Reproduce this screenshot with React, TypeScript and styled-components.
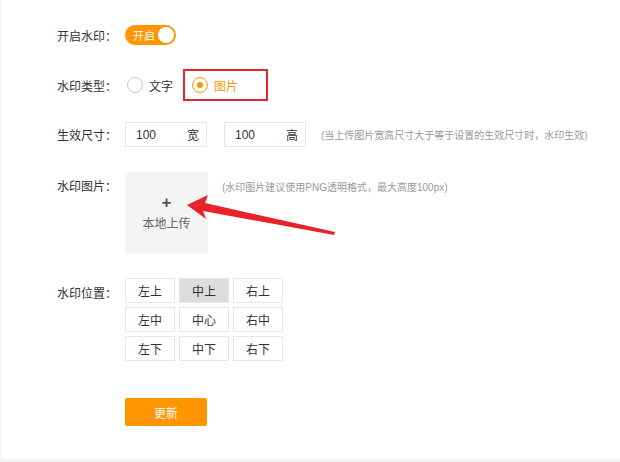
import * as React from 'react';
import styled, { createGlobalStyle } from 'styled-components';

// orange #ff9500, label #333, hint #999

const GlobalStyle = createGlobalStyle`
    html, body {
        margin: 0;
        padding: 0;
        background: #f2f2f2;
        font-family: "Liberation Sans", "Noto Sans CJK SC", sans-serif;
    }
`;

const Panel = styled.div`
    position: relative;
    margin-left: 1px;
    width: 640px;
    height: 459px;
    box-sizing: border-box;
    padding: 25px 0 0 56px;
    background: #fff;
    border-radius: 0 0 0 4px;
    overflow: hidden;
`;

const Row = styled.div<{ $top: number; $align?: string }>`
    display: flex;
    align-items: ${(p) => p.$align || 'center'};
    margin-top: ${(p) => p.$top}px;
`;

const Label = styled.div<{ $pad?: number }>`
    width: 68px;
    flex-shrink: 0;
    font-size: 12px;
    color: #333;
    padding-top: ${(p) => p.$pad || 0}px;
`;

const Switch = styled.div`
    width: 51px;
    height: 20px;
    border-radius: 10px;
    background: #ff9500;
    display: flex;
    align-items: center;
    justify-content: space-between;
    padding: 0 2px 0 8px;
    box-sizing: border-box;
    color: #fff;
    font-size: 11px;
`;

const Knob = styled.span`
    width: 16px;
    height: 16px;
    border-radius: 50%;
    background: #fff;
`;

const RadioOption = styled.label<{ $marked?: boolean }>`
    display: flex;
    align-items: center;
    gap: 6px;
    height: 32px;
    box-sizing: border-box;
    font-size: 12px;
    color: ${(p) => (p.$marked ? '#ff9500' : '#333')};
    border: 2px solid ${(p) => (p.$marked ? '#e3262b' : 'transparent')};
    padding: ${(p) => (p.$marked ? '0 28px 0 7px' : '0 8px 0 0')};
`;

const RadioCircle = styled.span<{ $checked?: boolean }>`
    width: 16px;
    height: 16px;
    box-sizing: border-box;
    border-radius: 50%;
    border: 1px solid ${(p) => (p.$checked ? '#ff9500' : '#c8c8c8')};
    display: flex;
    align-items: center;
    justify-content: center;
    &::after {
        content: '';
        width: 6px;
        height: 6px;
        border-radius: 50%;
        background: ${(p) => (p.$checked ? '#ff9500' : 'transparent')};
    }
`;

const SizeInput = styled.div`
    width: 82px;
    height: 25px;
    box-sizing: border-box;
    border: 1px solid #e6e6e6;
    display: flex;
    align-items: center;
    justify-content: space-between;
    padding: 0 7px 0 10px;
    font-size: 12px;
    color: #333;
    margin-right: 17px;
`;

const Hint = styled.span<{ $left: number; $pad?: number }>`
    font-size: 10px;
    color: #999;
    margin-left: ${(p) => p.$left}px;
    padding-top: ${(p) => p.$pad || 0}px;
`;

const Upload = styled.div`
    width: 83px;
    height: 82px;
    background: #f4f4f4;
    display: flex;
    flex-direction: column;
    align-items: center;
    justify-content: center;
    color: #666;
    font-size: 12px;
`;

const Plus = styled.span`
    font-size: 17px;
    font-weight: bold;
    color: #555;
    line-height: 14px;
    margin-bottom: 4px;
`;

const PosGrid = styled.div`
    display: grid;
    grid-template-columns: repeat(3, 50px);
    grid-auto-rows: 25px;
    gap: 4px;
`;

const PosCell = styled.div<{ $active?: boolean }>`
    box-sizing: border-box;
    border: 1px solid #e6e6e6;
    background: ${(p) => (p.$active ? '#ddd' : '#fff')};
    display: flex;
    align-items: center;
    justify-content: center;
    font-size: 12px;
    color: #333;
`;

const SubmitButton = styled.button`
    margin-left: 68px;
    width: 82px;
    height: 28px;
    border: none;
    border-radius: 2px;
    background: #ff9500;
    color: #fff;
    font-family: inherit;
    font-size: 12px;
`;

const Arrow = styled.svg`
    position: absolute;
    left: 0;
    top: 0;
    pointer-events: none;
`;

const positions = ['左上', '中上', '右上', '左中', '中心', '右中', '左下', '中下', '右下'];

const App = () => {
    return (
        <>
            <GlobalStyle />
            <Panel>
                <Row $top={0}>
                    <Label>开启水印：</Label>
                    <Switch>
                        开启
                        <Knob />
                    </Switch>
                </Row>

                <Row $top={24}>
                    <Label>水印类型：</Label>
                    <RadioOption>
                        <RadioCircle />
                        文字
                    </RadioOption>
                    <RadioOption $marked>
                        <RadioCircle $checked />
                        图片
                    </RadioOption>
                </Row>

                <Row $top={21}>
                    <Label>生效尺寸：</Label>
                    <SizeInput>
                        <span>100</span>
                        <span>宽</span>
                    </SizeInput>
                    <SizeInput>
                        <span>100</span>
                        <span>高</span>
                    </SizeInput>
                    <Hint $left={-2}>(当上传图片宽高尺寸大于等于设置的生效尺寸时，水印生效)</Hint>
                </Row>

                <Row $top={25} $align="flex-start">
                    <Label $pad={5}>水印图片：</Label>
                    <Upload>
                        <Plus>+</Plus>
                        本地上传
                    </Upload>
                    <Hint $left={14} $pad={7}>(水印图片建议使用PNG透明格式，最大高度100px)</Hint>
                </Row>

                <Row $top={24} $align="flex-start">
                    <Label $pad={6}>水印位置：</Label>
                    <PosGrid>
                        {positions.map((p) => (
                            <PosCell key={p} $active={p === '中上'}>
                                {p}
                            </PosCell>
                        ))}
                    </PosGrid>
                </Row>

                <Row $top={37}>
                    <SubmitButton>更新</SubmitButton>
                </Row>

                <Arrow width="620" height="462" viewBox="0 0 620 462">
                    <polygon
                        points="187,205 208,195 205,203 335,232 334,235 203,211 206,219"
                        fill="#e8222a"
                        transform="translate(-1 0)"
                    />
                </Arrow>
            </Panel>
        </>
    );
};

export default App;
